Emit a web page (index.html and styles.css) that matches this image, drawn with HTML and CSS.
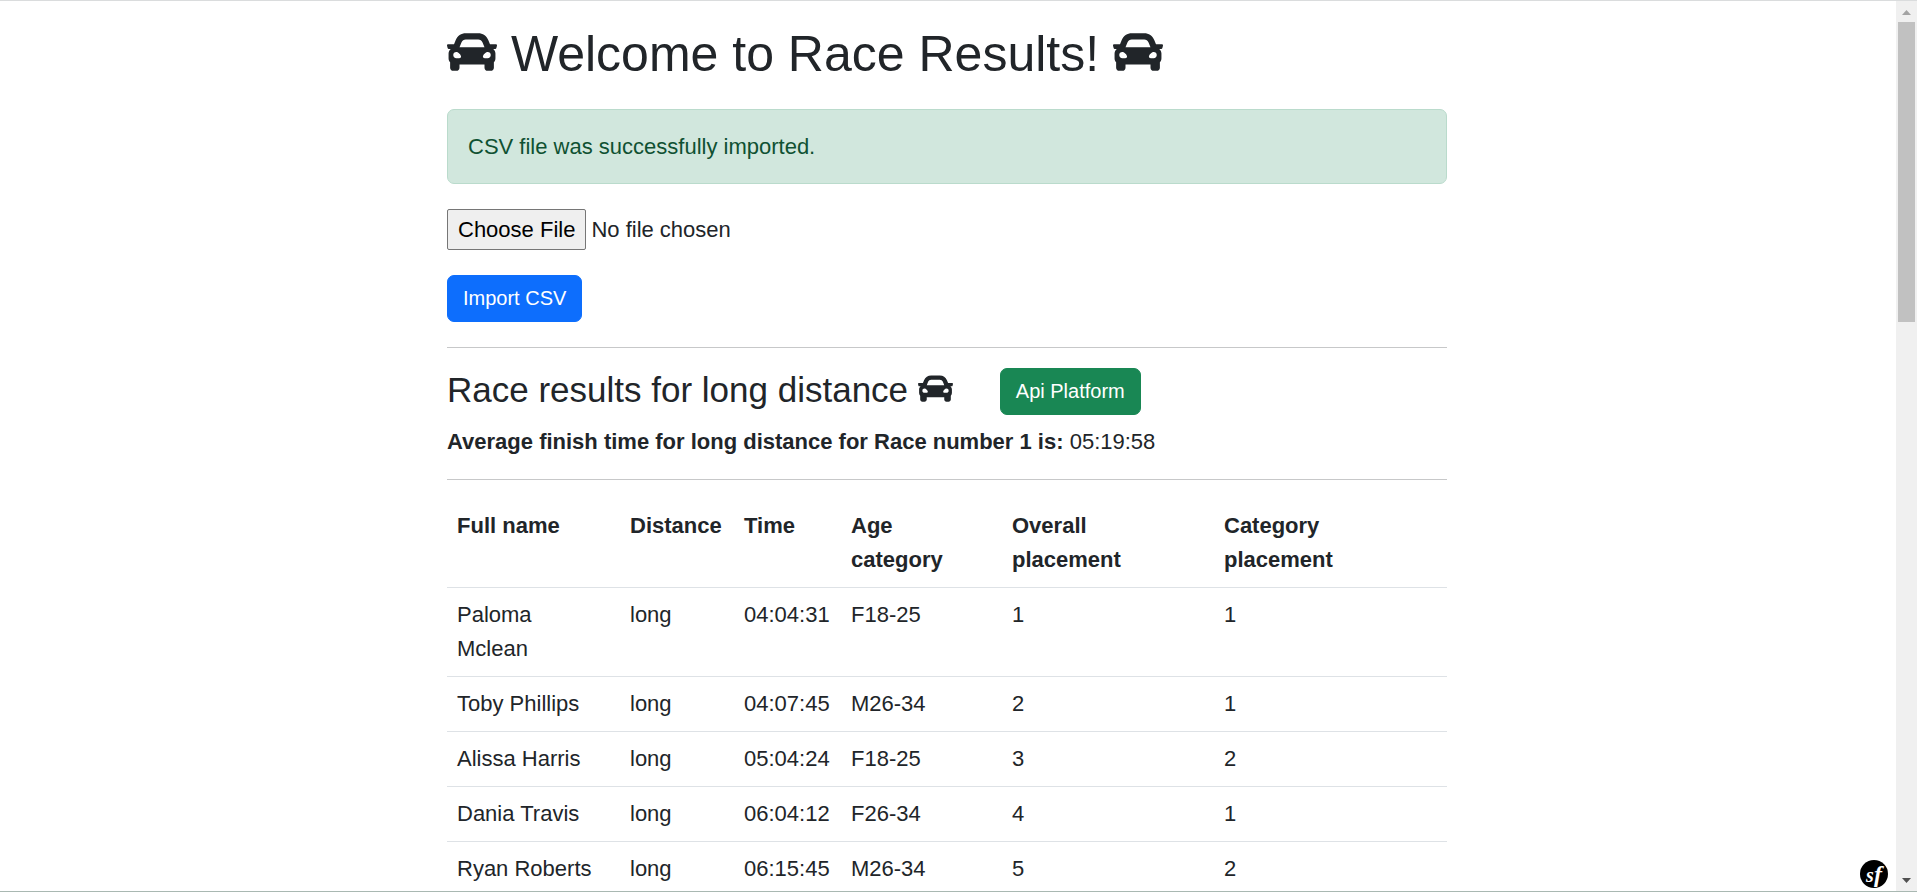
FILE: index.html
```html
<!DOCTYPE html>
<html lang="en">
<head>
<meta charset="utf-8">
<title>Race Results</title>
<link rel="stylesheet" href="styles.css">
</head>
<body>
<svg class="sprite" aria-hidden="true">
  <symbol id="car" viewBox="0 0 512 512"><path d="M499.99 176h-59.87l-16.64-41.6C406.38 91.63 365.57 64 319.5 64h-127c-46.06 0-86.88 27.63-103.99 70.4L71.87 176H12.01C4.2 176-1.53 183.34.37 190.91l6 24C7.7 220.25 12.5 224 18.01 224h20.07C24.65 235.73 16 252.78 16 272v48c0 16.12 6.16 30.67 16 41.93V416c0 17.67 14.33 32 32 32h32c17.67 0 32-14.33 32-32v-32h256v32c0 17.67 14.33 32 32 32h32c17.67 0 32-14.33 32-32v-54.07c9.84-11.25 16-25.8 16-41.93v-48c0-19.22-8.65-36.27-22.07-48H494c5.51 0 10.31-3.75 11.64-9.09l6-24c1.89-7.57-3.84-14.91-11.65-14.91zm-352.06-17.83c7.29-18.22 24.94-30.17 44.57-30.17h127c19.63 0 37.28 11.95 44.57 30.17L384 208H128l19.93-49.83zM96 319.8c-19.2 0-32-12.76-32-31.9S76.8 256 96 256s48 28.71 48 47.85-28.8 15.95-48 15.95zm320 0c-19.2 0-48 3.19-48-15.95S396.8 256 416 256s32 12.76 32 31.9-12.8 31.9-32 31.9z"/></symbol>
</svg>
<div class="window">
  <main class="page">
    <div class="container">
      <h1 class="title"><svg class="car" aria-hidden="true"><use href="#car"/></svg> Welcome to Race Results! <svg class="car" aria-hidden="true"><use href="#car"/></svg></h1>
      <div class="alert" role="alert">CSV file was successfully imported.</div>
      <form class="import">
        <input class="file" type="file" accept=".csv" aria-label="CSV file">
        <button class="btn btn-primary" type="submit">Import CSV</button>
      </form>
      <hr class="rule">
      <div class="heading">
        <h2 class="subtitle">Race results for long distance <svg class="car" aria-hidden="true"><use href="#car"/></svg></h2>
        <a class="btn btn-success" href="#api">Api Platform</a>
      </div>
      <p class="average"><b>Average finish time for long distance for Race number 1 is:</b> 05:19:58</p>
      <hr class="rule">
      <table class="results">
        <colgroup>
          <col class="col-name"><col class="col-distance"><col class="col-time"><col class="col-age"><col class="col-overall"><col class="col-category">
        </colgroup>
        <thead>
          <tr><th>Full name</th><th>Distance</th><th>Time</th><th>Age<br>category</th><th>Overall<br>placement</th><th>Category<br>placement</th></tr>
        </thead>
        <tbody>
          <tr><td>Paloma<br>Mclean</td><td>long</td><td>04:04:31</td><td>F18-25</td><td>1</td><td>1</td></tr>
          <tr><td>Toby Phillips</td><td>long</td><td>04:07:45</td><td>M26-34</td><td>2</td><td>1</td></tr>
          <tr><td>Alissa Harris</td><td>long</td><td>05:04:24</td><td>F18-25</td><td>3</td><td>2</td></tr>
          <tr><td>Dania Travis</td><td>long</td><td>06:04:12</td><td>F26-34</td><td>4</td><td>1</td></tr>
          <tr><td>Ryan Roberts</td><td>long</td><td>06:15:45</td><td>M26-34</td><td>5</td><td>2</td></tr>
        </tbody>
      </table>
    </div>
  </main>
  <div class="scrollbar" aria-hidden="true">
    <svg class="arrow arrow-up" viewBox="0 0 18 10"><path d="M0 10 9 0l9 10z"/></svg>
    <div class="track"><div class="thumb"></div></div>
    <svg class="arrow" viewBox="0 0 18 10"><path d="M0 0h18L9 10z"/></svg>
  </div>
  <button class="toolbar" type="button" aria-label="Symfony toolbar">s<span class="toolbar-tall">f</span></button>
</div>
</body>
</html>
```
FILE: styles.css
```css
* { box-sizing: border-box; }
body {
  margin: 0;
  background: #fff;
  color: #212529;
  font: 22px/34px "Liberation Sans", Arial, sans-serif;
}
.sprite { position: absolute; width: 0; height: 0; }
.window {
  position: relative;
  display: flex;
  height: 100vh;
  border-top: 1px solid #dadcdd;
  border-bottom: 1px solid #a9b8b2;
}
.page { flex: 1; min-width: 0; padding-right: 2px; overflow: auto; scrollbar-width: none; }
.container { max-width: 1000px; margin: 0 auto; padding-top: 23px; }
.title, .subtitle { margin: 0; font-weight: 400; }
.title { margin-bottom: 25px; font-size: 50px; line-height: 60px; }
.subtitle { font-size: 35px; line-height: 43px; }
.car { width: 1em; height: 1em; vertical-align: -0.125em; fill: currentColor; }
.alert {
  padding: 20px;
  border: 1px solid #badbcc;
  border-radius: 7px;
  background: #d1e7dd;
  color: #0f5132;
  line-height: 33px;
}
.import {
  display: flex;
  flex-direction: column;
  align-items: flex-start;
  gap: 25px;
  margin: 25px 0;
}
.file { width: 100%; height: 41px; font: inherit; }
.file::file-selector-button {
  height: 41px;
  margin: 0 5px 0 0;
  padding: 0 10px;
  border: 1px solid #767676;
  border-radius: 2px;
  background: #efefef;
  color: #000;
  font: inherit;
}
.btn {
  display: inline-block;
  padding: 8px 15px;
  border: 1px solid;
  border-radius: 7px;
  color: #fff;
  font: 20px/29px "Liberation Sans", Arial, sans-serif;
  text-decoration: none;
}
.btn-primary { border-color: #0d6efd; background: #0d6efd; }
.btn-success { border-color: #198754; background: #198754; }
.rule { margin: 0; border: 0; border-top: 1px solid #c7c8c9; }
.heading { display: flex; align-items: flex-start; gap: 47px; margin-top: 20px; }
.average { margin: 10px 0 20px; }
.results {
  width: 100%;
  margin-top: 19px;
  border-collapse: separate;
  border-spacing: 0;
  table-layout: fixed;
}
.results th, .results td {
  padding: 10px;
  border-bottom: 1px solid #dee2e6;
  text-align: left;
  vertical-align: top;
  white-space: nowrap;
}
.col-name { width: 17.3%; }
.col-distance { width: 11.4%; }
.col-time { width: 10.7%; }
.col-age { width: 16.1%; }
.col-overall { width: 21.2%; }
.col-category { width: 23.3%; }
.scrollbar {
  display: flex;
  flex-direction: column;
  align-items: center;
  width: 21px;
  padding: 9px 2px 8px;
  background: #f0f0f0;
}
.arrow { width: 9px; height: 5px; fill: #505050; }
.arrow-up { fill: #a3a3a3; }
.track { flex: 1; width: 100%; padding-top: 7px; }
.thumb { height: 35%; background: #c1c1c1; }
.toolbar {
  position: absolute;
  right: 29px;
  bottom: 3px;
  width: 28px;
  height: 28px;
  padding: 0;
  border: 0;
  border-radius: 50%;
  background: #000;
  color: #fff;
  font: italic bold 20px/24px "Liberation Serif", serif;
}
.toolbar-tall { font-size: 24px; }
```
